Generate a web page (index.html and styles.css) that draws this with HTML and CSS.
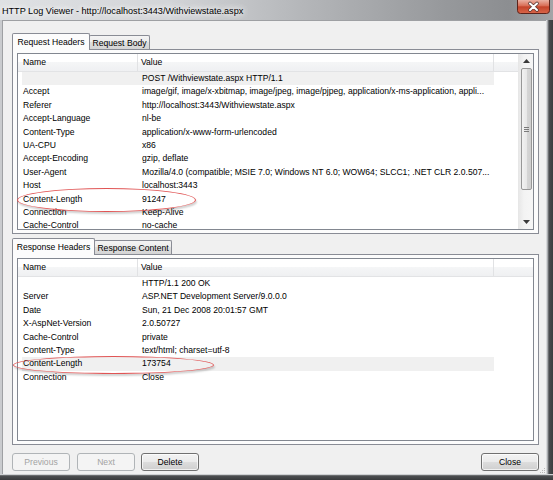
FILE: index.html
```html
<!DOCTYPE html>
<html>
<head>
<meta charset="utf-8">
<title>HTTP Log Viewer</title>
<link rel="stylesheet" href="styles.css">
</head>
<body>
<div class="window">
  <div class="titlebar">
    <span class="title">HTTP Log Viewer - http://localhost:3443/Withviewstate.aspx</span>
    <div class="close-btn">
      <svg width="33" height="14" viewBox="0 0 33 14">
        <defs>
          <linearGradient id="cg" x1="0" y1="0" x2="0" y2="1">
            <stop offset="0" stop-color="#eab0a2"/>
            <stop offset="0.45" stop-color="#d86a52"/>
            <stop offset="0.5" stop-color="#c4432a"/>
            <stop offset="1" stop-color="#d9674a"/>
          </linearGradient>
        </defs>
        <path d="M0.5 0 V10.5 Q0.5 13.5 3.5 13.5 H29.5 Q32.5 13.5 32.5 10.5 V0" fill="url(#cg)" stroke="#5c231a" stroke-width="1"/>
        <path d="M13 3.5 L20 10 M20 3.5 L13 10" stroke="#5a3a36" stroke-width="3.6" stroke-linecap="round"/>
        <path d="M13 3.5 L20 10 M20 3.5 L13 10" stroke="#ffffff" stroke-width="2" stroke-linecap="round"/>
      </svg>
    </div>
  </div>
  <div class="middle">
    <div class="frame-left"></div>
    <div class="client">
      <section class="tabsection upper">
        <div class="tabstrip">
          <div class="tab active w78">Request Headers</div>
          <div class="tab w60">Request Body</div>
        </div>
        <div class="panel">
          <div class="listview">
            <div class="lv-main">
              <div class="lv-header">
                <div class="hcell hname">Name</div>
                <div class="hcell hvalue">Value</div>
                <div class="hcell hrest"></div>
              </div>
              <div class="row sel"><div class="cell name"></div><div class="cell value">POST /Withviewstate.aspx HTTP/1.1</div></div>
              <div class="row"><div class="cell name">Accept</div><div class="cell value">image/gif, image/x-xbitmap, image/jpeg, image/pjpeg, application/x-ms-application, appli...</div></div>
              <div class="row"><div class="cell name">Referer</div><div class="cell value">http://localhost:3443/Withviewstate.aspx</div></div>
              <div class="row"><div class="cell name">Accept-Language</div><div class="cell value">nl-be</div></div>
              <div class="row"><div class="cell name">Content-Type</div><div class="cell value">application/x-www-form-urlencoded</div></div>
              <div class="row"><div class="cell name">UA-CPU</div><div class="cell value">x86</div></div>
              <div class="row"><div class="cell name">Accept-Encoding</div><div class="cell value">gzip, deflate</div></div>
              <div class="row"><div class="cell name">User-Agent</div><div class="cell value">Mozilla/4.0 (compatible; MSIE 7.0; Windows NT 6.0; WOW64; SLCC1; .NET CLR 2.0.507...</div></div>
              <div class="row"><div class="cell name">Host</div><div class="cell value">localhost:3443</div></div>
              <div class="row"><div class="cell name">Content-Length</div><div class="cell value">91247</div></div>
              <div class="row"><div class="cell name">Connection</div><div class="cell value">Keep-Alive</div></div>
              <div class="row"><div class="cell name">Cache-Control</div><div class="cell value">no-cache</div></div>
            </div>
            <div class="scrollbar">
              <div class="sb-arrow">
                <svg width="7" height="4" viewBox="0 0 7 4"><path d="M0 4 L3.5 0 L7 4 Z" fill="#3a3a3a"/></svg>
              </div>
              <div class="sb-thumb">
                <svg width="5" height="5" viewBox="0 0 5 5"><path d="M0 0.5 H5 M0 2.5 H5 M0 4.5 H5" stroke="#7a7a7a" stroke-width="1"/></svg>
              </div>
              <div class="sb-track"></div>
              <div class="sb-arrow">
                <svg width="7" height="4" viewBox="0 0 7 4"><path d="M0 0 L3.5 4 L7 0 Z" fill="#3a3a3a"/></svg>
              </div>
            </div>
          </div>
        </div>
      </section>

      <section class="tabsection lower">
        <div class="tabstrip">
          <div class="tab active w83">Response Headers</div>
          <div class="tab w77">Response Content</div>
        </div>
        <div class="panel">
          <div class="listview">
            <div class="lv-main">
              <div class="lv-header">
                <div class="hcell hname">Name</div>
                <div class="hcell hvalue">Value</div>
                <div class="hcell hrest"></div>
              </div>
              <div class="row"><div class="cell name"></div><div class="cell value">HTTP/1.1 200 OK</div></div>
              <div class="row"><div class="cell name">Server</div><div class="cell value">ASP.NET Development Server/9.0.0.0</div></div>
              <div class="row"><div class="cell name">Date</div><div class="cell value">Sun, 21 Dec 2008 20:01:57 GMT</div></div>
              <div class="row"><div class="cell name">X-AspNet-Version</div><div class="cell value">2.0.50727</div></div>
              <div class="row"><div class="cell name">Cache-Control</div><div class="cell value">private</div></div>
              <div class="row"><div class="cell name">Content-Type</div><div class="cell value">text/html; charset=utf-8</div></div>
              <div class="row sel"><div class="cell name">Content-Length</div><div class="cell value">173754</div></div>
              <div class="row"><div class="cell name">Connection</div><div class="cell value">Close</div></div>
            </div>
          </div>
        </div>
      </section>

      <div class="buttons">
        <button class="btn" disabled>Previous</button>
        <button class="btn" disabled>Next</button>
        <button class="btn">Delete</button>
        <button class="btn close">Close</button>
      </div>

      <svg class="grip" width="7" height="7" viewBox="0 0 7 7">
        <g fill="#b8b8b8">
          <rect x="5" y="1" width="1" height="1"/>
          <rect x="3" y="3" width="1" height="1"/><rect x="5" y="3" width="1" height="1"/>
          <rect x="1" y="5" width="1" height="1"/><rect x="3" y="5" width="1" height="1"/><rect x="5" y="5" width="1" height="1"/>
        </g>
      </svg>
    </div>
    <div class="frame-right"></div>
  </div>
  <div class="frame-bottom"></div>

  <div class="mark mark-req"></div>
  <div class="mark mark-resp"></div>
</div>
</body>
</html>
```

FILE: styles.css
```css
* { box-sizing: border-box; }
html, body { margin: 0; padding: 0; }
body {
  width: 553px;
  height: 480px;
  overflow: hidden;
  background: #4a4a4a;
  font-family: "Liberation Sans", Arial, sans-serif;
  font-size: 8.6px;
  color: #000;
}

.window {
  position: relative;
  width: 553px;
  height: 480px;
  display: flex;
  flex-direction: column;
}

/* title bar */
.titlebar {
  height: 20px;
  flex: none;
  display: flex;
  justify-content: space-between;
  align-items: flex-start;
  background: linear-gradient(90deg, #dfe1e4 0%, #d3d5d8 30%, #b4b6b9 55%, #97999c 80%, #8c8e91 92%, #a2a4a7 100%);
}
.title {
  padding: 5px 0 0 2px;
  font-size: 9.1px;
  line-height: 12px;
  white-space: nowrap;
  text-shadow: 0 0 5px #fff, 0 0 9px #fff, 0 0 12px #fff;
}
.close-btn {
  width: 33px;
  height: 14px;
  margin-right: 3px;
  line-height: 0;
}

.middle {
  flex: 1;
  display: flex;
  min-height: 0;
}
.frame-left {
  width: 2px;
  flex: none;
  background: #c9cbce;
}
.frame-right {
  width: 7px;
  flex: none;
  background: linear-gradient(90deg, #d6d8da 0 1px, #a9abae 1px 2px, #6a6c6f 2px 3px, #4a4c4f 3px, #3c3e40 100%);
}
.frame-bottom {
  height: 6px;
  flex: none;
  background: linear-gradient(#cfd1d3 0 1px, #6a6c6e 1px 2px, #4c4e50 2px, #3a3b3d 100%);
}

.client {
  flex: 1;
  position: relative;
  background: #f0f0f0;
  border-top: 1px solid #9ea0a3;
  border-left: 1px solid #9ea0a3;
  padding: 12px 7px 0 9px;
  display: flex;
  flex-direction: column;
  overflow: hidden;
}

/* tabs */
.tabstrip {
  display: flex;
  height: 17px;
  margin-bottom: -1px;
  position: relative;
  z-index: 1;
  align-items: flex-start;
}
.lower { margin-top: 4px; }
.tab {
  border: 1px solid #898c95;
  border-bottom: none;
  border-radius: 2px 2px 0 0;
  text-align: center;
  white-space: nowrap;
  line-height: 11px;
}
.tab.active {
  height: 17px;
  padding-top: 3px;
  background: #fcfcfc;
}
.tab:not(.active) {
  height: 14px;
  margin-top: 2px;
  padding-top: 2px;
  margin-left: -1px;
  background: linear-gradient(#f4f4f4 0%, #ebebeb 50%, #dedede 50%, #d4d4d4 100%);
}
.w78 { width: 78px; }
.w60 { width: 61px; }
.w83 { width: 83px; }
.w77 { width: 78px; }

.panel {
  border: 1px solid #898c95;
  background: #fcfcfc;
  padding: 3px 4px 3px 4px;
}
.upper .panel { height: 185px; }
.lower .panel { height: 191px; }

.listview {
  border: 1px solid #828790;
  background: #fff;
  display: flex;
  height: 100%;
  overflow: hidden;
}
.lv-main {
  flex: 1;
  min-width: 0;
  overflow: hidden;
}
.lv-header {
  display: flex;
  height: 18px;
  line-height: 17px;
  background: linear-gradient(#ffffff 0%, #ffffff 45%, #f5f6f7 46%, #eff0f2 100%);
  border-bottom: 1px solid #e2e3e5;
}
.hcell { white-space: nowrap; }
.hname {
  width: 120px;
  padding-left: 5px;
  border-right: 1px solid #e1e2e4;
}
.hvalue {
  width: 356px;
  padding-left: 3px;
  border-right: 1px solid #e1e2e4;
}
.hrest { flex: 1; }

.row {
  display: flex;
  height: 13.4px;
  line-height: 13.4px;
  margin-left: 4px;
  width: 472px;
  white-space: nowrap;
}
.row.sel { background: #f0f0f0; }
.cell.name {
  width: 116px;
  flex: none;
  padding-left: 1px;
}
.cell.value {
  flex: 1;
  min-width: 0;
  padding-left: 4px;
  overflow: hidden;
}

/* scrollbar */
.scrollbar {
  width: 15px;
  flex: none;
  display: flex;
  flex-direction: column;
  background: linear-gradient(90deg, #e6e6e6 0%, #f3f3f3 40%, #f6f6f6 100%);
}
.sb-arrow {
  height: 14px;
  flex: none;
  display: flex;
  align-items: center;
  justify-content: center;
  padding-left: 2px;
}
.sb-thumb {
  height: 122px;
  flex: none;
  margin: 0 1px 0 3px;
  border: 1px solid #979797;
  border-radius: 2px;
  background: linear-gradient(90deg, #f2f2f2 0%, #e8e8e8 50%, #d6d6d6 51%, #cfcfcf 100%);
  display: flex;
  align-items: center;
  justify-content: center;
}
.sb-track { flex: 1; }

/* buttons */
.buttons {
  display: flex;
  margin-top: 8px;
  height: 18px;
  flex: none;
}
.btn {
  width: 58px;
  height: 18px;
  margin-right: 7px;
  padding: 0;
  border: 1px solid #707070;
  border-radius: 3px;
  background: linear-gradient(#f3f3f3 0%, #ebebeb 48%, #dddddd 50%, #cfcfcf 100%);
  box-shadow: inset 0 0 0 1px rgba(255,255,255,0.7);
  font-family: "Liberation Sans", Arial, sans-serif;
  font-size: 8.6px;
  color: #000;
}
.btn:nth-child(2) { margin-right: 6px; }
.btn:disabled {
  border-color: #b0b4b7;
  background: #f4f4f4;
  box-shadow: none;
  color: #a3a3a3;
}
.btn.close {
  margin-left: auto;
  margin-right: 0;
}

.grip {
  position: absolute;
  right: 0;
  bottom: 0;
}

/* red annotation marks */
.mark {
  position: absolute;
  border: 1px solid #e05454;
  border-radius: 50%;
  box-shadow: 1px 2px 2px rgba(0,0,0,0.18);
}
.mark-req {
  left: 17px;
  top: 188px;
  width: 179px;
  height: 24px;
}
.mark-resp {
  left: 13px;
  top: 356px;
  width: 201px;
  height: 18px;
}
```
